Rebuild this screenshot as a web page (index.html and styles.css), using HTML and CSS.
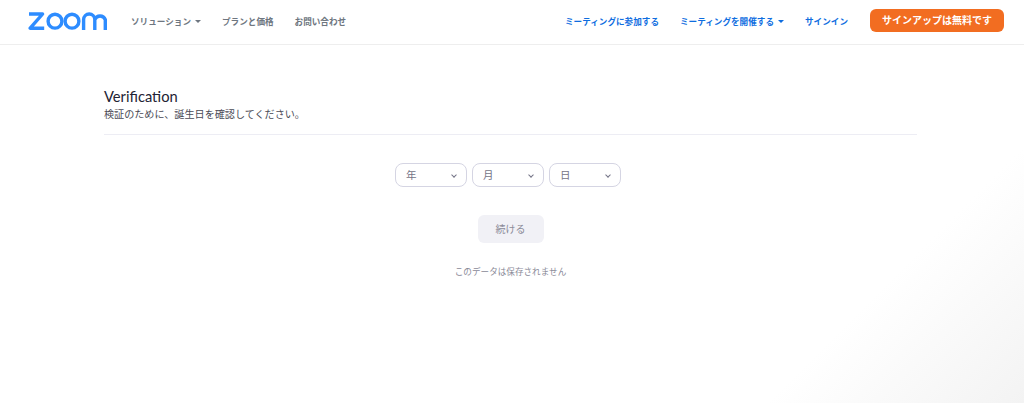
FILE: index.html
```html
<!DOCTYPE html>
<html lang="ja">
  <head>
    <meta charset="utf-8" />
    <title>Verification</title>
    <link rel="stylesheet" href="styles.css">
  </head>

  <body>
    <header class="top-nav">
      <a class="logo" href="#" aria-label="Zoom">
        <svg width="79" height="18" viewBox="0 0 79 18">
          <g fill="none" stroke="#2d8cff" stroke-width="3.4">
            <path d="M1 2h13.6L2.2 16.2h14" stroke-linejoin="round" />
            <circle cx="27" cy="9.2" r="6.9" />
            <circle cx="44" cy="9.2" r="6.9" />
            <path d="M55.6 18V7.6a5.6 5.6 0 0 1 11.2 0V18M66.8 7.6a5.6 5.6 0 0 1 10.5 0V18" />
          </g>
        </svg>
      </a>
      <nav class="nav-left">
        <a href="#">ソリューション<span class="caret"></span></a>
        <a href="#">プランと価格</a>
        <a href="#">お問い合わせ</a>
      </nav>
      <nav class="nav-right">
        <a href="#">ミーティングに参加する</a>
        <a href="#">ミーティングを開催する<span class="caret"></span></a>
        <a href="#">サインイン</a>
        <a class="signup" href="#">サインアップは無料です</a>
      </nav>
    </header>

    <main class="content">
      <h1>Verification</h1>
      <p class="subtitle">検証のために、誕生日を確認してください。</p>
      <hr />

      <form class="birth-form">
        <div class="selects">
          <div class="select">年<span class="chevron"></span></div>
          <div class="select">月<span class="chevron"></span></div>
          <div class="select">日<span class="chevron"></span></div>
        </div>
        <button class="continue" type="button" disabled>続ける</button>
        <p class="note">このデータは保存されません</p>
      </form>
    </main>
  </body>
</html>
```

FILE: styles.css
```css
* {
  box-sizing: border-box;
}

html,
body {
  height: 100%;
}

body {
  margin: 0;
  overflow: hidden;
  font-family: Lato, "Noto Sans CJK JP", sans-serif;
  background: linear-gradient(135deg, #ffffff 82%, #f3f3f3 100%);
}

a {
  text-decoration: none;
}

.top-nav {
  display: flex;
  align-items: center;
  height: 45px;
  padding: 0 20px 3px 28px;
  background-color: #ffffff;
  border-bottom: 1px solid #eeeeee;
  font-size: 8.6px;
  font-weight: 600;
}

.logo {
  display: flex;
  width: 79px;
  margin-top: 1px;
}

.nav-left {
  display: flex;
  gap: 21px;
  margin-left: 24px;
}

.nav-left a {
  color: #6e7680;
}

.nav-right {
  display: flex;
  align-items: center;
  gap: 21px;
  margin-left: auto;
}

.nav-right a {
  color: #0e6ddf;
}

.caret {
  display: inline-block;
  margin-left: 4px;
  vertical-align: 2px;
  border-top: 3px solid currentColor;
  border-left: 3px solid transparent;
  border-right: 3px solid transparent;
}

.nav-right .signup {
  padding: 0 12px;
  height: 23px;
  line-height: 22px;
  margin-left: 1px;
  border-radius: 6px;
  background-color: #f26d21;
  color: #ffffff;
  font-size: 10px;
}

.content {
  width: 813px;
  margin-left: 104px;
  padding-top: 42px;
}

h1 {
  margin: 0 0 1px;
  color: #232333;
  font-size: 14.7px;
  font-weight: 400;
  line-height: 18px;
}

.subtitle {
  margin: 0;
  color: #4a4a55;
  font-size: 10.1px;
  line-height: 16px;
}

hr {
  margin: 12px 0 0;
  border: 0;
  border-top: 1px solid #ededf4;
}

.birth-form {
  display: flex;
  flex-direction: column;
  align-items: center;
  padding-top: 28px;
}

.selects {
  display: flex;
  gap: 5px;
  margin-right: 5px;
}

.select {
  display: flex;
  align-items: center;
  justify-content: space-between;
  width: 72px;
  height: 24px;
  padding: 0 10px 2px;
  border: 1px solid #d5d5e3;
  border-radius: 8px;
  background-color: #ffffff;
  color: #747487;
  font-size: 10.5px;
}

.chevron {
  width: 4px;
  height: 4px;
  margin-top: 1px;
  border-right: 1px solid #747487;
  border-bottom: 1px solid #747487;
  transform: rotate(45deg);
}

.continue {
  width: 66px;
  height: 28px;
  margin-top: 28px;
  padding: 0 0 2px;
  border: 0;
  border-radius: 6px;
  background-color: #f1f1f6;
  color: #8a8a98;
  font-family: inherit;
  font-size: 10px;
}

.note {
  margin: 22px 0 0;
  color: #8a8a98;
  font-size: 8.6px;
  line-height: 14px;
}
```
